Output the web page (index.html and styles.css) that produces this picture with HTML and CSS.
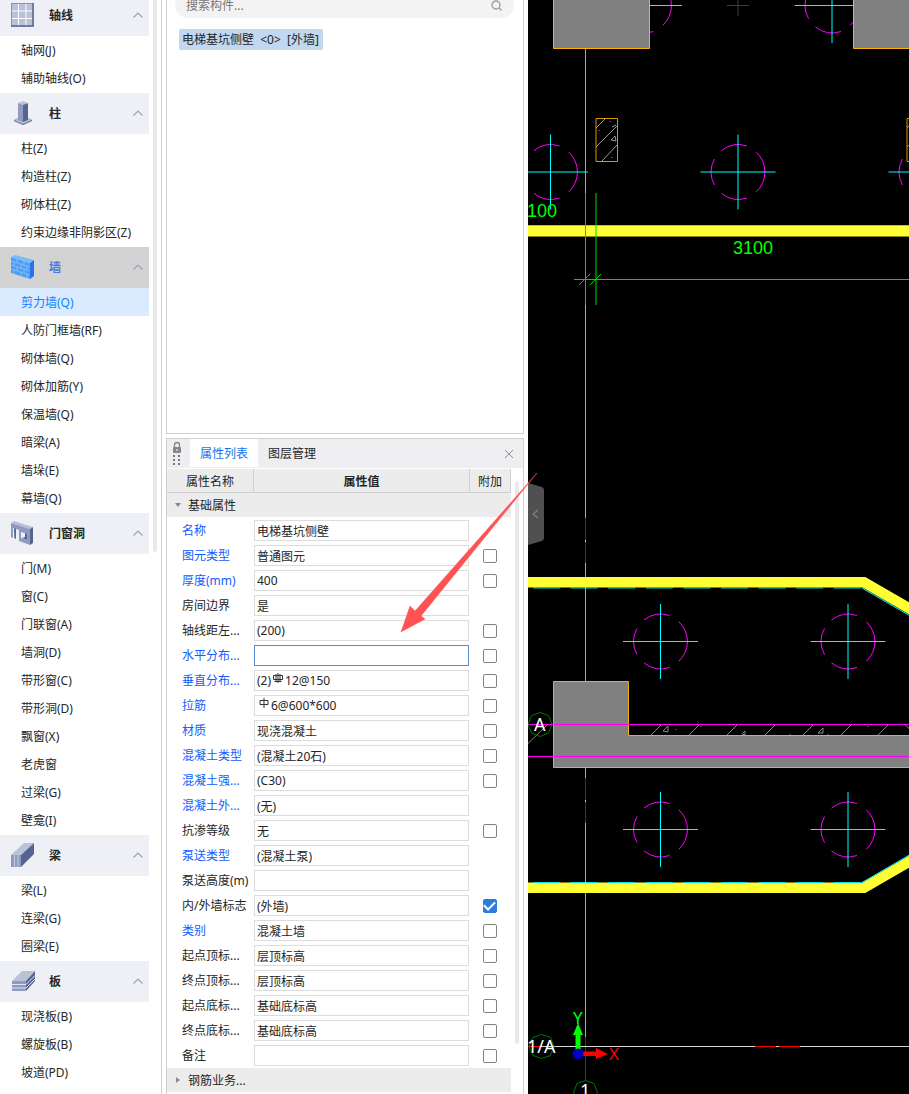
FILE: index.html
```html
<!DOCTYPE html>
<html lang="zh-CN">
<head>
<meta charset="utf-8">
<title>构件建模</title>
<link rel="stylesheet" href="styles.css">
</head>
<body>
<svg class="defs" aria-hidden="true">
  <symbol id="chevron" viewBox="0 0 10 6"><path d="M.5 5.5 5 1l4.5 4.5" fill="none" stroke="#98a2bd" stroke-width="1.2"/></symbol>
  <symbol id="pile" viewBox="-40 -40 80 80" overflow="visible">
    <path d="M-16.5-21.4A27 27 0 0 1 9-26M18.3-19.8A27 27 0 0 1 18.3 19.8M9 26A27 27 0 0 1-16.5 21.4M-23.5 13A27 27 0 0 1-23.5-13" fill="none" stroke="#f0f"/>
    <path d="M-37.5 0H37.5M0-37.5V37.5" stroke="#0ff"/>
  </symbol>
</svg>
<main class="app">
  <nav class="sidebar" aria-label="构件导航">
    <div class="tree">
      <section class="group">
        <button class="group-head"><svg class="icon" viewBox="0 0 24 24"><path d="M0 0h23v24H0z" fill="#b8c1d8"/><path d="M.5 0v23.5M0 .5h22" stroke="#8792b4"/><path d="M7.5 1v22M15 1v22M1 8h21M1 15.500h21" stroke="#fff"/><path d="M22 0v23H0" fill="none" stroke="#56658f" stroke-width="1.500"/></svg><span>轴线</span><svg class="chev"><use href="#chevron"/></svg></button>
        <ul><li><a href="#">轴网(J)</a></li><li><a href="#">辅助轴线(O)</a></li></ul>
      </section>
      <section class="group">
        <button class="group-head"><svg class="icon" viewBox="0 0 24 24"><path d="m3 19 9-4 9 4v1l-9 4-9-4z" fill="#55648f"/><path d="m3 19 9-4 9 4-9 4z" fill="#b5bfd6"/><path d="M3 19v1.500l9 3.500v-1.500z" fill="#8997bb"/><path d="M7 2v17l5 2V3z" fill="#8d9bc0"/><path d="M12 3v18l5-2V2z" fill="#56658f"/><path d="m7 2 5-2 5 2-5 2z" fill="#b8c2d8"/></svg><span>柱</span><svg class="chev"><use href="#chevron"/></svg></button>
        <ul><li><a href="#">柱(Z)</a></li><li><a href="#">构造柱(Z)</a></li><li><a href="#">砌体柱(Z)</a></li><li><a href="#">约束边缘非阴影区(Z)</a></li></ul>
      </section>
      <section class="group current">
        <button class="group-head"><svg class="icon" viewBox="0 0 24 24"><path d="m0 2 19 6v16L0 18z" fill="#4f9df5"/><path d="m0 2 4-2 19 5-4 3z" fill="#7db9f8"/><path d="m19 8 4-3v16l-4 3z" fill="#1f75ec"/><path d="m0 6 19 6M0 10l19 6M0 14l19 6M6 4v4M13 6v4M3 7v4M10 9v4M16 11v4M6 12v4M13 14v4M3 15v4M10 17v4M16 19v4" fill="none" stroke="#8ec3fa" stroke-width=".8"/></svg><span>墙</span><svg class="chev"><use href="#chevron"/></svg></button>
        <ul><li><a class="active" href="#" aria-current="page">剪力墙(Q)</a></li><li><a href="#">人防门框墙(RF)</a></li><li><a href="#">砌体墙(Q)</a></li><li><a href="#">砌体加筋(Y)</a></li><li><a href="#">保温墙(Q)</a></li><li><a href="#">暗梁(A)</a></li><li><a href="#">墙垛(E)</a></li><li><a href="#">幕墙(Q)</a></li></ul>
      </section>
      <section class="group">
        <button class="group-head"><svg class="icon" viewBox="0 0 24 24"><path d="m0 2 3-2 19 6-3 2z" fill="#b6c0d6"/><path d="m19 8 3-2v16l-3 2z" fill="#56658f"/><path fill-rule="evenodd" d="m0 2 19 6v16L8 20V9L5 8v10l-2-1V7L2 7v10l-2-1zM10 11v6l6 2v-6z" fill="#8d9bc0"/><path d="m3 7 2 1v10l-1-1z" fill="#56658f"/><path d="m14 12 2 1v6l-5-2 3-1z" fill="#56658f"/></svg><span>门窗洞</span><svg class="chev"><use href="#chevron"/></svg></button>
        <ul><li><a href="#">门(M)</a></li><li><a href="#">窗(C)</a></li><li><a href="#">门联窗(A)</a></li><li><a href="#">墙洞(D)</a></li><li><a href="#">带形窗(C)</a></li><li><a href="#">带形洞(D)</a></li><li><a href="#">飘窗(X)</a></li><li><a href="#">老虎窗</a></li><li><a href="#">过梁(G)</a></li><li><a href="#">壁龛(I)</a></li></ul>
      </section>
      <section class="group">
        <button class="group-head"><svg class="icon" viewBox="0 0 24 24"><path d="M0 12 13 0h10L10 12z" fill="#b9c3d8"/><path d="M0 12h10v12H0z" fill="#8d9bc0"/><path d="M3.500 12v12M7 12v12" stroke="#c4cde0"/><path d="M10 12 23 0v11L10 24z" fill="#56658f"/></svg><span>梁</span><svg class="chev"><use href="#chevron"/></svg></button>
        <ul><li><a href="#">梁(L)</a></li><li><a href="#">连梁(G)</a></li><li><a href="#">圈梁(E)</a></li></ul>
      </section>
      <section class="group">
        <button class="group-head"><svg class="icon" viewBox="0 0 24 24"><path d="M1 12 11 2h13L15 12z" fill="#b9c3d8"/><path d="M1 12h14v10H1z" fill="#8d9bc0"/><path d="m15 12 9-10v10l-9 10z" fill="#56658f"/><path d="M1 15.500h14l9-9M1 19h14l9-9" fill="none" stroke="#dfe4ef"/></svg><span>板</span><svg class="chev"><use href="#chevron"/></svg></button>
        <ul><li><a href="#">现浇板(B)</a></li><li><a href="#">螺旋板(B)</a></li><li><a href="#">坡道(PD)</a></li></ul>
      </section>
    </div>
    <div class="rail"><div class="thumb"></div></div>
  </nav>

  <div class="middle">
    <section class="components" aria-label="构件列表">
      <label class="search"><input type="search" placeholder="搜索构件..." aria-label="搜索构件"><svg viewBox="0 0 12 12"><circle cx="5" cy="5" r="4" fill="none" stroke="#9b9b9b" stroke-width="1.300"/><path d="m8 8 2.500 2.500" stroke="#9b9b9b" stroke-width="1.300"/></svg></label>
      <button class="component">电梯基坑侧壁 &nbsp;&lt;0&gt; &nbsp;[外墙]</button>
    </section>

    <section class="props" aria-label="属性">
      <div class="tabs">
        <svg class="grip" viewBox="0 0 12 24"><path d="M3.500 7V4a2.500 2.500 0 0 1 5 0v3" fill="none" stroke="#85878b" stroke-width="1.300"/><rect x="2" y="6" width="8" height="6" rx="1" fill="#85878b"/><path d="M6 8v2" stroke="#fff"/><path d="M2 14h2v2H2zM7 14h2v2H7zM2 18h2v2H2zM7 18h2v2H7zM2 22h2v2H2zM7 22h2v2H7z" fill="#77797d"/></svg>
        <button class="tab selected">属性列表</button><button class="tab">图层管理</button>
        <button class="close" aria-label="关闭"><svg viewBox="0 0 10 10"><path d="m1 1 8 8M9 1 1 9" stroke="#8f8f8f"/></svg></button>
      </div>
      <div class="props-body">
        <table>
          <colgroup><col class="c-name"><col><col class="c-add"></colgroup>
          <thead><tr><th class="thin">属性名称</th><th>属性值</th><th class="thin">附加</th></tr></thead>
          <tbody>
            <tr class="section"><td colspan="3"><button><svg viewBox="0 0 6 6"><path d="M0 1h6L3 5z" fill="#888"/></svg>基础属性</button></td></tr>
            <tr class="key"><td><label for="p1">名称</label></td><td><input class="field" id="p1" value="电梯基坑侧壁"></td><td></td></tr>
            <tr class="key"><td><label for="p2">图元类型</label></td><td><input class="field" id="p2" value="普通图元"></td><td><input type="checkbox" aria-label="附加 图元类型"></td></tr>
            <tr class="key"><td><label for="p3">厚度(mm)</label></td><td><input class="field" id="p3" value="400"></td><td><input type="checkbox" aria-label="附加 厚度"></td></tr>
            <tr><td><label for="p4">房间边界</label></td><td><input class="field" id="p4" value="是"></td><td></td></tr>
            <tr><td><label for="p5">轴线距左...</label></td><td><input class="field" id="p5" value="(200)"></td><td><input type="checkbox" aria-label="附加 轴线距左"></td></tr>
            <tr class="key"><td><label for="p6">水平分布...</label></td><td><input class="field editing" id="p6" value=""></td><td><input type="checkbox" aria-label="附加 水平分布"></td></tr>
            <tr class="key"><td><label for="p7">垂直分布...</label></td><td><div class="field"><span>(2)</span><svg class="bar" viewBox="0 0 11 12"><path d="M5.500 1v10M1 3.500h9v4H1zM3.500 2v7.500M7.500 2v7.500M2 9.500h7" fill="none" stroke="#333"/></svg><input id="p7" value="12@150"></div></td><td><input type="checkbox" aria-label="附加 垂直分布"></td></tr>
            <tr class="key"><td><label for="p8">拉筋</label></td><td><div class="field"><svg class="bar" viewBox="0 0 11 12"><path d="M5.500 1v10M1.500 3.500h8v4h-8z" fill="none" stroke="#333"/></svg><input id="p8" value="6@600*600"></div></td><td><input type="checkbox" aria-label="附加 拉筋"></td></tr>
            <tr class="key"><td><label for="p9">材质</label></td><td><input class="field" id="p9" value="现浇混凝土"></td><td><input type="checkbox" aria-label="附加 材质"></td></tr>
            <tr class="key"><td><label for="p10">混凝土类型</label></td><td><input class="field" id="p10" value="(混凝土20石)"></td><td><input type="checkbox" aria-label="附加 混凝土类型"></td></tr>
            <tr class="key"><td><label for="p11">混凝土强...</label></td><td><input class="field" id="p11" value="(C30)"></td><td><input type="checkbox" aria-label="附加 混凝土强度"></td></tr>
            <tr class="key"><td><label for="p12">混凝土外...</label></td><td><input class="field" id="p12" value="(无)"></td><td></td></tr>
            <tr><td><label for="p13">抗渗等级</label></td><td><input class="field" id="p13" value="无"></td><td><input type="checkbox" aria-label="附加 抗渗等级"></td></tr>
            <tr class="key"><td><label for="p14">泵送类型</label></td><td><input class="field" id="p14" value="(混凝土泵)"></td><td></td></tr>
            <tr><td><label for="p15">泵送高度(m)</label></td><td><input class="field" id="p15" value=""></td><td></td></tr>
            <tr><td><label for="p16">内/外墙标志</label></td><td><input class="field" id="p16" value="(外墙)"></td><td><input type="checkbox" checked aria-label="附加 内外墙标志"></td></tr>
            <tr class="key"><td><label for="p17">类别</label></td><td><input class="field" id="p17" value="混凝土墙"></td><td><input type="checkbox" aria-label="附加 类别"></td></tr>
            <tr><td><label for="p18">起点顶标...</label></td><td><input class="field" id="p18" value="层顶标高"></td><td><input type="checkbox" aria-label="附加 起点顶标高"></td></tr>
            <tr><td><label for="p19">终点顶标...</label></td><td><input class="field" id="p19" value="层顶标高"></td><td><input type="checkbox" aria-label="附加 终点顶标高"></td></tr>
            <tr><td><label for="p20">起点底标...</label></td><td><input class="field" id="p20" value="基础底标高"></td><td><input type="checkbox" aria-label="附加 起点底标高"></td></tr>
            <tr><td><label for="p21">终点底标...</label></td><td><input class="field" id="p21" value="基础底标高"></td><td><input type="checkbox" aria-label="附加 终点底标高"></td></tr>
            <tr><td><label for="p22">备注</label></td><td><input class="field" id="p22" value=""></td><td><input type="checkbox" aria-label="附加 备注"></td></tr>
            <tr class="section"><td colspan="3"><button><svg viewBox="0 0 6 6"><path d="M1 0v6l4-3z" fill="#888"/></svg>钢筋业务...</button></td></tr>
          </tbody>
        </table>
        <div class="rail"><div class="thumb"></div></div>
      </div>
    </section>
  </div>

  <section class="canvas" aria-label="绘图区">
    <svg class="drawing">
      <g transform="translate(-528 0)">
        <path d="M585.500 48V193M585.500 305V518M585.500 563V778M585.500 823V1037" stroke="#a8a8a8"/>
        <path d="M585.500 518v45M585.500 778v45M585.500 1037v10" stroke="#c00000"/>
        <path d="M585.500 540v2M585.500 800v2" stroke="#ccc"/>
        <use href="#pile" x="604.500" y="-34.500" width="80" height="80"/>
        <use href="#pile" x="792" y="-34.500" width="80" height="80"/>
        <path d="M727 5.500h22M738 0v16" stroke="#34452a"/>
        <path d="M553.500-1V48.500h96V-1M1040-1V48.500H853.500V-1" fill="#808080" stroke="#ffb400"/>
        <use href="#pile" x="510.500" y="132" width="80" height="80"/>
        <use href="#pile" x="698" y="132" width="80" height="80"/>
        <use href="#pile" x="886" y="132" width="80" height="80"/>
        <g fill="none">
          <path d="m596 128 9-9M596 147l21-21M602 161l15-16M612 127l4-2M599 130v1M610 121v1M612 157v1M615 136l-4 4 5 1z" stroke="#999"/>
          <path d="M596 118.500h21.500v43H596z" stroke="#d89800"/>
          <path d="M929 118.500h-22v43h22" stroke="#d89800"/>
          <path d="m907 128 9-9M907 147l22-21" stroke="#999"/>
        </g>
        <path d="M528 226h2000v10.500H528z" fill="#ffff34"/>
        <path d="M528 225.500h2000" stroke="#2ff0d0"/>
        <path d="M528 236.500h2000" stroke="#8a8a00"/>
        <path d="M585.500 193v112M596 193v112M574 279.500h2000M579 285l11-11M590 285l11-11" fill="none" stroke="#00d800"/>
        <text class="dim" x="733" y="254">3100</text>
        <text class="dim" x="527" y="217">100</text>
        <path d="M528 577H865.300L1138 735 865.300 893H528V882.500H862.700L1118 735 862.700 587.500H528z" fill="#ffff34"/>
        <path d="M533 588H862M533 882.500H862" stroke="#00e0e0" stroke-dasharray="27 10.600"/>
        <path d="M862 588 1116 735 862 882.500" fill="none" stroke="#0ff"/>
        <path d="M585.500 577v11M585.500 882v11" stroke="#f0e9a0"/>
        <use href="#pile" x="620.500" y="601.500" width="80" height="80"/>
        <use href="#pile" x="808" y="601.500" width="80" height="80"/>
        <use href="#pile" x="620.500" y="789.500" width="80" height="80"/>
        <use href="#pile" x="808" y="789.500" width="80" height="80"/>
        <path d="m528 743.500 19-18.500M651 735l10-10M689 735l10-10M727 735l10-10M765 735l10-10M803 735l10-10M841 735l10-10M878 735l10-10M905 725l6 5M663 731l5-5v6zM742 734l3-3v4zM818 733l5-5v5zM676 729v1M701 726v1M790 734v1M868 726v1M828 734v1" fill="none" stroke="#888"/>
        <path d="M1040 735.500H628.500V681.500H553.500V767.500H1040" fill="#808080" stroke="#f0b000"/>
        <path d="M528 724.500h2000M528 756.500h2000" stroke="#f0f"/>
        <path d="m540 712.500 8.500 3 3.500 9-3.500 8.500-8.500 3.500-8.500-3.500-3.500-8.500 3.500-9z" fill="none" stroke="#007800"/>
        <text class="axis" x="534" y="731">A</text>
        <path d="M528 1046.500h2000" stroke="#d8d8d8"/>
        <path d="M528 1046.500h12M755 1046.500h21M779 1046.500h21" stroke="#f00"/>
        <path d="M585.500 1047v33" stroke="#006400"/>
        <path d="m541.500 1034.500 9 3 3.500 9-3.500 9-9 3-8.500-3-4-9 4-9zM585.500 1080.500l8.500 3 3.500 9-3.500 8.500-17 0-3.500-8.500 3.500-9z" fill="none" stroke="#007800"/>
        <text class="axis" x="527" y="1053">1/A</text>
        <text class="axis" x="580" y="1097">1</text>
        <path d="M575.500 1050v-15H573l5-12 5 12h-2.500v15z" fill="#0f0"/>
        <path d="M583 1051.500h13v-3.500l12 6-12 5v-3h-13z" fill="#f00"/>
        <circle cx="578" cy="1054" r="5.500" fill="#0000c0"/>
        <text class="ucs y" x="573" y="1024">Y</text>
        <text class="ucs x" x="609" y="1060">X</text>
      </g>
    </svg>
    <button class="collapse" aria-label="收起"><svg viewBox="0 0 16 62"><path d="M0 0 14 4q2 1 2 3v48q0 2-2 3L0 62z" fill="#505050"/><path d="m10 27-5 4 5 4" fill="none" stroke="#999"/></svg></button>
  </section>

  <svg class="pointer" viewBox="0 0 138 160" aria-hidden="true"><path d="M137 0 21 143l4 3-24 13 9-26 5 5z" fill="#ff5252" stroke="#ff5252" stroke-width=".5"/></svg>
</main>
</body>
</html>
```

FILE: styles.css
```css
* { box-sizing: border-box; }

body {
  margin: 0;
  font: 12px/20px "Noto Sans", "Noto Sans CJK SC", sans-serif;
  color: #262626;
  background: #fff;
}

button, input {
  font: inherit;
  color: inherit;
  border: 0;
  padding: 0;
  background: none;
}

.defs { position: absolute; width: 0; height: 0; }

.app {
  position: relative;
  display: grid;
  grid-template-columns: 162px 366px 1fr;
  height: 100vh;
  overflow: hidden;
}

/* Navigation */
.sidebar {
  display: flex;
  gap: 4px;
  min-height: 0;
  border-right: 1px solid #d0d0d0;
}
.tree { width: 149px; margin-top: -5px; }
.group { padding-bottom: 1px; }
.group-head {
  display: flex;
  align-items: center;
  gap: 14px;
  width: 100%;
  height: 41px;
  padding: 0 6px 0 11px;
  background: #eff0f5;
  font-weight: 700;
  text-align: left;
}
.group-head span { flex: 1; }
.icon { width: 24px; height: 24px; margin-bottom: 1px; }
.chev { width: 10px; height: 6px; margin-bottom: 2px; }
.current .group-head { background: #d3d3d3; color: #4a7be0; }
.group ul { margin: 0; padding: 0; list-style: none; }
.group a {
  display: block;
  padding: 5px 0 3px 21px;
  color: #262626;
  text-decoration: none;
  white-space: nowrap;
}
.group a.active { background: #dbebff; color: #0a84ff; }

.rail { width: 4px; }
.thumb { background: #e9e9e9; border-radius: 0 0 2px 2px; }
.sidebar .thumb { height: 552px; }

/* Component list and properties */
.middle {
  display: flex;
  flex-direction: column;
  gap: 4px;
  padding: 0 4px;
  min-height: 0;
}
.components {
  flex: 1;
  border: 1px solid #d0d0d0;
  border-top: 0;
  padding: 0 9px 0 8px;
  min-height: 0;
}
.search {
  display: flex;
  align-items: center;
  margin-top: -8px;
  height: 26px;
  padding: 2px 11px 0;
  border-radius: 13px;
  background: #f3f3f3;
}
.search input { flex: 1; min-width: 0; outline: 0; }
.search input::placeholder { color: #777; opacity: 1; }
.search svg { width: 12px; height: 12px; }
.component {
  display: block;
  margin: 11px 0 0 4px;
  height: 21px;
  padding: 0 4px 0 3px;
  border-radius: 2px;
  background: #c1d8f0;
  white-space: nowrap;
}

.props {
  flex: none;
  padding-bottom: 1px;
  border: 1px solid #d0d0d0;
  border-bottom: 0;
}
.tabs {
  display: flex;
  height: 29px;
  padding-bottom: 1px;
  background: #eeeef1;
}
.grip { width: 12px; height: 24px; margin: 2px 7px 0 4px; }
.tab { padding: 1px 10px 0; }
.tab.selected { background: #fff; color: #1473e6; }
.close { width: 10px; height: 10px; margin: 10px 9px 0 auto; }
.close svg { display: block; }

.props-body {
  display: flex;
  gap: 4px;
  margin-top: 1px;
}
.props-body .thumb { margin-top: 12px; height: 563px; border-radius: 2px; }

table {
  width: 344px;
  table-layout: fixed;
  border-collapse: separate;
  border-spacing: 0;
}
.c-name { width: 87px; }
.c-add { width: 41px; }
th {
  height: 24px;
  padding: 2px 0 0;
  background: #ececec;
  border-right: 1px solid #d0d0d0;
  border-bottom: 1px solid #d0d0d0;
}
.thin { font-weight: 400; }
td { height: 25px; padding: 0; }
td:first-child { padding-left: 15px; white-space: nowrap; }
td:last-child { padding-right: 2px; }
td label, td .field { display: block; }
.key label { color: #0f5cff; }

.section td:first-child {
  padding: 1px 0 0;
  text-align: left;
  background: #ececec;
  border-bottom: 1px solid #fff;
}
.section button {
  display: flex;
  align-items: center;
  gap: 7px;
  padding-left: 8px;
}
.section svg { width: 6px; height: 6px; margin-bottom: 2px; }

.field {
  width: 215px;
  height: 21px;
  padding: 0 2px;
  border: 1px solid #dcdcdc;
  background: #fff;
  outline: 0;
}
.field.editing { border-color: #5b87d6; }
td div.field { display: flex; line-height: 19px; }
.field input { flex: 1; min-width: 0; height: 19px; outline: 0; }
.bar { width: 12px; height: 12px; margin: 1px 1px 0; }

input[type="checkbox"] {
  appearance: none;
  display: block;
  width: 14px;
  height: 14px;
  margin: 0 auto;
  border: 1px solid #828282;
  border-radius: 2px;
  background: #fff;
}
input[type="checkbox"]:checked {
  display: grid;
  place-items: center;
  border-color: #2a7de1;
  background: #2a7de1;
}
input[type="checkbox"]:checked::before {
  content: "";
  width: 9px;
  height: 5px;
  margin-bottom: 3px;
  border: solid #fff;
  border-width: 0 0 2px 2px;
  rotate: -45deg;
}

/* Drawing area */
.canvas { position: relative; min-width: 0; background: #000; }
.drawing { display: block; width: 100%; height: 100%; overflow: hidden; }
.dim { font: 18px "Liberation Sans", sans-serif; fill: #0f0; }
.axis { font: 18px "Noto Sans", sans-serif; fill: #fff; }
.ucs { font: 17px "Noto Sans", sans-serif; }
.ucs.x { fill: #f00; }
.ucs.y { fill: #0f0; }
.collapse {
  position: absolute;
  left: 0;
  top: 483px;
  width: 16px;
  height: 62px;
}
.collapse svg { display: block; }
.pointer {
  position: absolute;
  left: 400px;
  top: 473px;
  width: 138px;
  height: 160px;
  pointer-events: none;
}
```
